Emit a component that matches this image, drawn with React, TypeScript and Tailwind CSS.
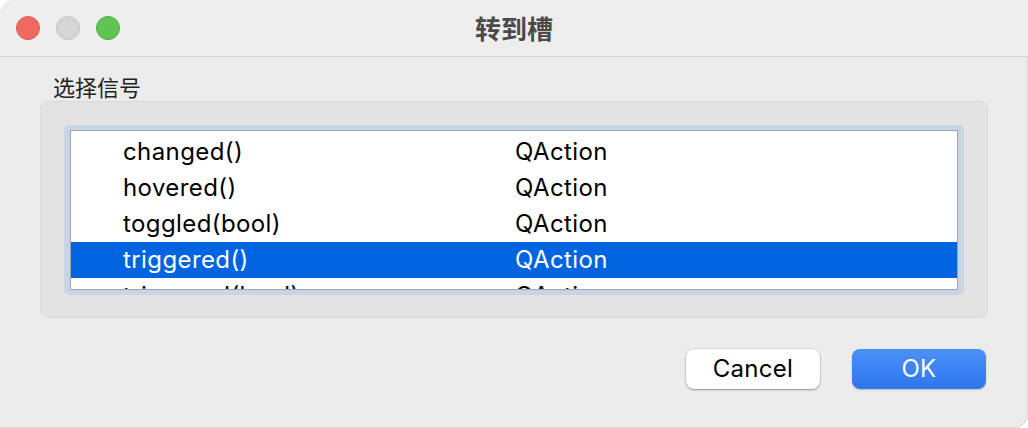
import React from "react";

const rows = [
  { name: "changed()", cls: "QAction" },
  { name: "hovered()", cls: "QAction" },
  { name: "toggled(bool)", cls: "QAction" },
  { name: "triggered()", cls: "QAction" },
  { name: "triggered(bool)", cls: "QAction" },
];

function TrafficLights() {
  return (
    <div className="flex items-center gap-[16px] pl-[16px]">
      <span className="w-[24px] h-[24px] rounded-full bg-[#ee6a5f] border border-[#d85a50]" />
      <span className="w-[24px] h-[24px] rounded-full bg-[#d6d6d6] border border-[#c2c2c2]" />
      <span className="w-[24px] h-[24px] rounded-full bg-[#5fc454] border border-[#4ea944]" />
    </div>
  );
}

export default function App() {
  const [selected, setSelected] = React.useState(3);

  return (
    <div className="w-[1028px] h-[428px] bg-white overflow-hidden font-['Inter','Noto_Sans_CJK_SC',sans-serif]">
      <div className="w-full h-full bg-[#ececec] rounded-tl-[14px] rounded-br-[14px] flex flex-col shadow-[inset_-1px_-1px_0_rgba(0,0,0,0.08)]">
        {/* title bar */}
        <div className="h-[57px] shrink-0 grid grid-cols-[1fr_auto_1fr] items-center border-b border-[#d4d4d4] bg-[#eeeeee] rounded-tl-[14px]">
          <TrafficLights />
          <div className="text-[26px] font-bold text-[#4b4b4b] font-['Noto_Sans_CJK_SC',sans-serif] leading-none">
            转到槽
          </div>
          <div />
        </div>

        <div className="px-[40px] flex flex-col">
          <div className="mt-[14px] pl-[13px] h-[30px] leading-[30px] text-[22px] text-[#222] font-['Noto_Sans_CJK_SC',sans-serif]">
            选择信号
          </div>

          {/* group box */}
          <div className="h-[217px] rounded-[8px] bg-[#e3e3e3] border border-[#d9d9d9] px-[23px] pt-[23px]">
            <div className="h-[170px] rounded-[5px] bg-[#cbd4e3] px-[6px] py-[5px]">
              <div className="h-full bg-white border border-[#9ea6b4] overflow-hidden pt-[3px]">
                {rows.map((r, i) => (
                  <div
                    key={r.name}
                    onClick={() => setSelected(i)}
                    className={
                      "h-[36px] grid grid-cols-[444px_1fr] items-center text-[24px] tracking-[0.4px] leading-none " +
                      (i === selected ? "bg-[#0064e1] text-white" : "text-[#000]")
                    }
                  >
                    <span className="pl-[52px]">{r.name}</span>
                    <span>{r.cls}</span>
                  </div>
                ))}
              </div>
            </div>
          </div>

          {/* buttons */}
          <div className="mt-[31px] flex justify-end gap-[32px] pr-[2px]">
            <button className="w-[134px] h-[40px] rounded-[8px] bg-white text-[24px] tracking-[0.3px] text-[#000] shadow-[0_1px_2px_rgba(0,0,0,0.35),0_0_0_0.5px_rgba(0,0,0,0.12)]">
              Cancel
            </button>
            <button className="w-[134px] h-[40px] rounded-[8px] bg-gradient-to-b from-[#4a91f8] to-[#2f75ef] text-[24px] tracking-[0.3px] text-white shadow-[0_1px_2px_rgba(0,0,0,0.2)]">
              OK
            </button>
          </div>
        </div>
      </div>
    </div>
  );
}
